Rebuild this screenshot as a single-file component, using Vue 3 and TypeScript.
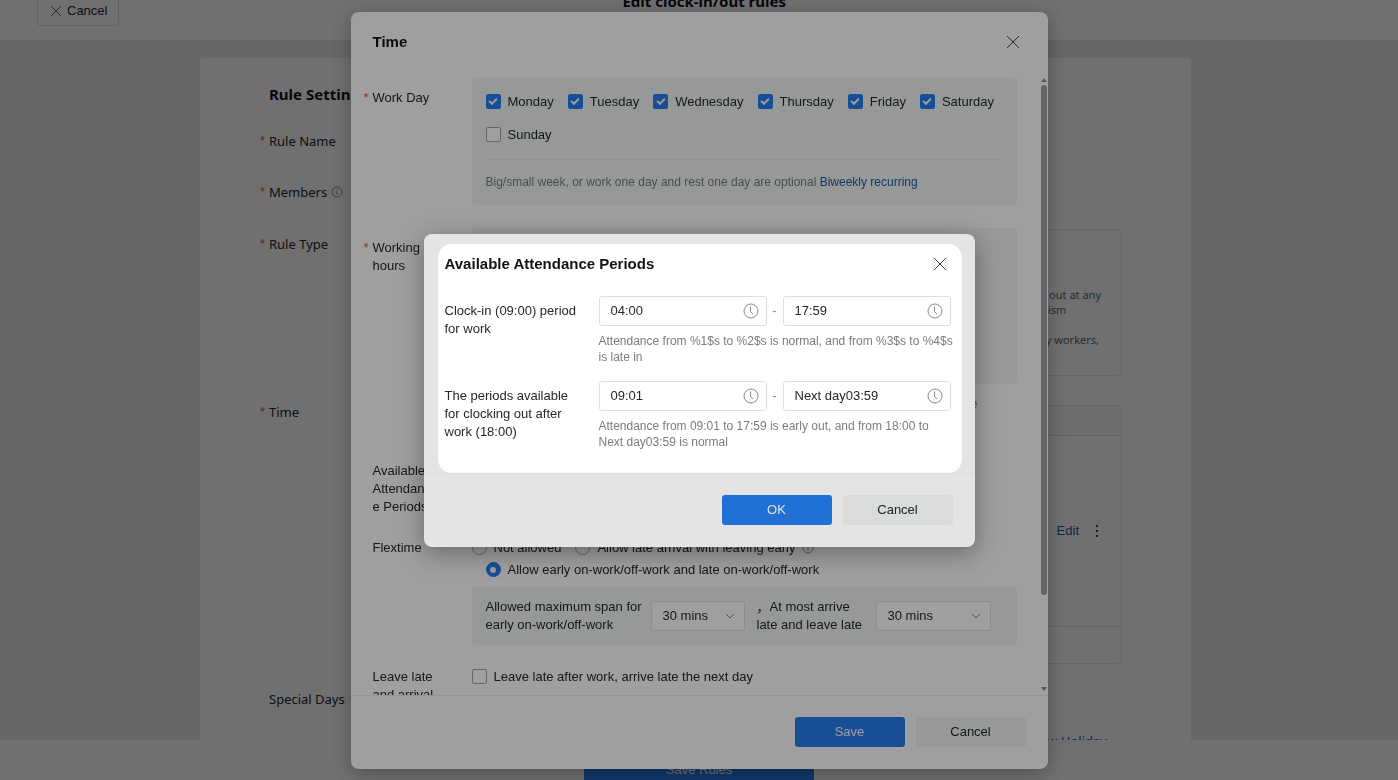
<script setup lang="ts">
import { ref } from 'vue'

interface Day {
  name: string
  on: boolean
}

interface Period {
  id: string
  label: string
  from: string
  to: string
  hint: string
}

const days = ref<Day[]>([
  { name: 'Monday', on: true },
  { name: 'Tuesday', on: true },
  { name: 'Wednesday', on: true },
  { name: 'Thursday', on: true },
  { name: 'Friday', on: true },
  { name: 'Saturday', on: true },
  { name: 'Sunday', on: false },
])

const periods = ref<Period[]>([
  {
    id: 'in',
    label: 'Clock-in (09:00) period for work',
    from: '04:00',
    to: '17:59',
    hint: 'Attendance from %1$s to %2$s is normal, and from %3$s to %4$s is late in',
  },
  {
    id: 'out',
    label: 'The periods available for clocking out after work (18:00)',
    from: '09:01',
    to: 'Next day03:59',
    hint: 'Attendance from 09:01 to 17:59 is early out, and from 18:00 to Next day03:59 is normal',
  },
])

const flextime = ref('both')
const earlySpan = ref('30 mins')
const lateSpan = ref('30 mins')
const leaveLate = ref(false)
const wideComma = '\uFF0C'
</script>

<template>
  <div class="page">
    <header class="topbar">
      <button type="button" class="back">
        <svg width="12" height="12" viewBox="0 0 12 12"><path d="M1 1l10 10M11 1L1 11" /></svg>
        Cancel
      </button>
      <h1>Edit clock-in/out rules</h1>
    </header>

    <main class="content">
      <section class="sheet">
        <h2>Rule Settings</h2>
        <div class="row"><span class="name required">Rule Name</span></div>
        <div class="row">
          <span class="name required">Members
            <svg class="info" width="12" height="12" viewBox="0 0 12 12"><circle cx="6" cy="6" r="5" /><path d="M6 5.2V9M6 3v1.2" /></svg>
          </span>
        </div>
        <div class="row type-row">
          <span class="name required">Rule Type</span>
          <div class="type-card">
            <p>Members can clock in and out at any<br>hours, no late or absenteeism<br>records.<br>Suited for sales, temporary workers,</p>
          </div>
        </div>
        <div class="row time-row">
          <span class="name required">Time</span>
          <div class="time-card">
            <div class="time-head"></div>
            <div class="time-body">
              <a href="#">Edit</a>
              <button type="button" class="more" aria-label="More">
                <svg width="4" height="14" viewBox="0 0 4 14"><path d="M1 1h2v2H1zM1 6h2v2H1zM1 11h2v2H1z" /></svg>
              </button>
            </div>
            <div class="time-foot"></div>
          </div>
        </div>
        <div class="row special-row">
          <span class="name">Special Days</span>
          <a href="#" class="holiday">New Holiday</a>
        </div>
      </section>
    </main>

    <footer class="bottombar">
      <button type="button" class="save-rules">Save Rules</button>
    </footer>
  </div>

  <div class="mask">
    <section class="dialog" role="dialog" aria-label="Time">
      <header class="dialog-head">
        <h2>Time</h2>
        <button type="button" class="close" aria-label="Close">
          <svg width="14" height="14" viewBox="0 0 14 14"><path d="M1 1l12 12M13 1L1 13" /></svg>
        </button>
      </header>

      <div class="dialog-main">
        <div class="form">
          <div class="field days-field">
            <span class="label required">Work Day</span>
            <div class="panel days-panel">
              <div class="days">
                <label v-for="day in days" :key="day.name" class="choice">
                  <input v-model="day.on" type="checkbox">{{ day.name }}
                </label>
              </div>
              <p class="note">Big/small week, or work one day and rest one day are optional <a href="#">Biweekly recurring</a></p>
            </div>
          </div>

          <div class="field hours-field">
            <span class="label required">Working hours</span>
            <div class="stack">
              <div class="panel hours-panel"></div>
              <p class="hours-note">Break time is deducted from the working time</p>
            </div>
          </div>

          <div class="field periods-field">
            <span class="label">Available Attendance Periods</span>
          </div>

          <div class="field flex-field">
            <span class="label">Flextime</span>
            <div class="stack">
              <div class="radios">
                <label class="choice"><input v-model="flextime" type="radio" name="flex" value="none">Not allowed</label>
                <label class="choice"><input v-model="flextime" type="radio" name="flex" value="late">Allow late arrival with leaving early
                  <svg class="info" width="12" height="12" viewBox="0 0 12 12"><circle cx="6" cy="6" r="5" /><path d="M6 5.2V9M6 3v1.2" /></svg>
                </label>
              </div>
              <label class="choice indented"><input v-model="flextime" type="radio" name="flex" value="both">Allow early on-work/off-work and late on-work/off-work</label>
              <div class="panel span-panel">
                <label for="early" class="early-text">Allowed maximum span for early on-work/off-work</label>
                <span class="picker early-picker">
                  <select id="early" v-model="earlySpan"><option>30 mins</option></select>
                  <svg width="10" height="10" viewBox="0 0 10 10"><path d="M1 3l4 4 4-4" /></svg>
                </span>
                <label for="late" class="late-text">{{ wideComma }}At most arrive late and leave late</label>
                <span class="picker late-picker">
                  <select id="late" v-model="lateSpan"><option>30 mins</option></select>
                  <svg width="10" height="10" viewBox="0 0 10 10"><path d="M1 3l4 4 4-4" /></svg>
                </span>
              </div>
            </div>
          </div>

          <div class="field">
            <span class="label">Leave late and arrival</span>
            <label class="choice"><input v-model="leaveLate" type="checkbox">Leave late after work, arrive late the next day</label>
          </div>
        </div>

        <div class="scroll" aria-hidden="true">
          <svg width="6" height="4" viewBox="0 0 6 4"><path d="M0 4l3-4 3 4z" /></svg>
          <i></i>
          <b></b>
          <svg width="6" height="4" viewBox="0 0 6 4"><path d="M0 0l3 4 3-4z" /></svg>
        </div>
      </div>

      <footer class="actions">
        <button type="button" class="btn primary">Save</button>
        <button type="button" class="btn">Cancel</button>
      </footer>
    </section>
  </div>

  <div class="mask">
    <section class="popup" role="dialog" aria-label="Available Attendance Periods">
      <div class="popup-main">
        <header class="popup-head">
          <h2>Available Attendance Periods</h2>
          <button type="button" class="close" aria-label="Close">
            <svg width="14" height="14" viewBox="0 0 14 14"><path d="M1 1l12 12M13 1L1 13" /></svg>
          </button>
        </header>
        <div v-for="period in periods" :key="period.id" class="period">
          <label :for="period.id" class="period-label">{{ period.label }}</label>
          <div class="period-body">
            <div class="range">
              <span class="time-box">
                <input :id="period.id" v-model="period.from" type="text">
                <svg width="16" height="16" viewBox="0 0 16 16"><circle cx="8" cy="8" r="7" /><path d="M7.500 3.500v5l2.500 2.500" /></svg>
              </span>
              <span class="dash">-</span>
              <span class="time-box">
                <input v-model="period.to" type="text" :aria-label="period.label + ' end'">
                <svg width="16" height="16" viewBox="0 0 16 16"><circle cx="8" cy="8" r="7" /><path d="M7.500 3.500v5l2.500 2.500" /></svg>
              </span>
            </div>
            <p class="hint">{{ period.hint }}</p>
          </div>
        </div>
      </div>
      <footer class="actions">
        <button type="button" class="btn primary">OK</button>
        <button type="button" class="btn">Cancel</button>
      </footer>
      <div class="spotlight"></div>
    </section>
  </div>
</template>

<style>
html,
body {
  height: 100%;
  overflow: hidden;
}
</style>

<style scoped>
* {
  box-sizing: border-box;
}

h1,
h2,
p {
  margin: 0;
}

a {
  color: #2058a8;
  text-decoration: none;
}

button,
input,
select {
  font: inherit;
  color: inherit;
}

button {
  cursor: pointer;
}

svg {
  flex: none;
  fill: none;
  stroke: currentColor;
}

.page,
.mask {
  font: 13px/18px "Liberation Sans", Arial, "Noto Sans CJK SC", sans-serif;
  color: #24282d;
}

h1,
h2 {
  color: #111417;
}

.page {
  display: flex;
  flex-direction: column;
  height: 100vh;
  overflow: hidden;
  background: #ebebeb;
}

.topbar {
  display: flex;
  flex: none;
  align-items: flex-end;
  height: 40px;
  padding: 0 37px 14px;
  background: #fff;
}

.topbar h1 {
  flex: 1;
  margin: 0 72px 0 0;
  padding-bottom: 16px;
  font: 700 15px/18px "Noto Sans", sans-serif;
  text-align: center;
}

.back {
  display: flex;
  align-items: center;
  gap: 5px;
  height: 31px;
  padding: 0 11px 0 12px;
  border: 1px solid #dcdcdc;
  border-radius: 4px;
  background: #fff;
}

.back svg {
  color: #5c6066;
}

.content {
  display: flex;
  flex: 1;
  justify-content: center;
  min-height: 0;
  padding: 18px 7px 0 0;
  overflow: hidden;
}

.sheet {
  width: 100%;
  max-width: 991px;
  height: 720px;
  padding: 24px 69px 0;
  border-radius: 4px;
  background: #fff;
  font-family: "Noto Sans", sans-serif;
}

.sheet h2 {
  margin-bottom: 20px;
  font-size: 15px;
  line-height: 24px;
}

.row {
  display: flex;
  min-height: 30px;
  margin-bottom: 21px;
}

.name {
  position: relative;
  flex: none;
  width: 104px;
  line-height: 30px;
}

.required::before {
  content: "*";
  position: absolute;
  left: -9px;
  color: #e8503f;
  font-family: "Liberation Sans", Arial, sans-serif;
}

.info {
  color: #8a8f96;
  vertical-align: -1px;
}

.type-row {
  justify-content: space-between;
  margin-top: 22px;
}

.type-card {
  width: 365px;
  height: 147px;
  padding: 57px 20px 0 0;
  border: 1px solid #e8e8e8;
  border-radius: 4px;
  font-size: 11px;
  line-height: 15px;
  color: #60646a;
  text-align: right;
}

.type-card p {
  display: inline-block;
  text-align: left;
}

.time-card {
  flex: 1;
  height: 259px;
  margin-top: 8px;
  border: 1px solid #e8e8e8;
  border-radius: 4px;
  font-family: "Liberation Sans", Arial, sans-serif;
}

.time-head {
  height: 30px;
  border-bottom: 1px solid #e2e2e2;
  background: #f7f7f7;
}

.time-body {
  display: flex;
  align-items: center;
  justify-content: flex-end;
  gap: 16px;
  height: 190px;
  padding-right: 22px;
}

.time-foot {
  border-top: 1px solid #e2e2e2;
}

.more {
  display: flex;
  padding: 0;
  border: 0;
  background: none;
  color: #1d4f8f;
}

.more path {
  fill: currentColor;
  stroke: none;
}

.special-row {
  justify-content: space-between;
  margin-top: -1px;
}

.holiday {
  padding: 48px 15px 0 0;
  line-height: 18px;
}

.bottombar {
  flex: none;
  height: 40px;
  padding-top: 12px;
  background: #fff;
  text-align: center;
}

.save-rules {
  width: 230px;
  height: 36px;
  border: 0;
  border-radius: 3px;
  background: #267ef0;
  color: #fff;
}

.mask {
  position: fixed;
  inset: 0;
  display: flex;
  align-items: center;
  justify-content: center;
  background: rgba(0, 0, 0, 0.3);
}

.dialog {
  display: flex;
  flex-direction: column;
  width: 50%;
  max-width: 697px;
  height: calc(100vh - 23px);
  border-radius: 8px;
  background: #fff;
  box-shadow: 0 4px 20px rgba(0, 0, 0, 0.3);
}

.dialog-head {
  display: flex;
  flex: none;
  align-items: center;
  justify-content: space-between;
  height: 66px;
  padding: 0 28px 6px 22px;
}

.dialog-head h2,
.popup-head h2 {
  font-size: 15px;
  line-height: 20px;
}

.close {
  display: flex;
  padding: 0;
  border: 0;
  background: none;
  color: #3c4046;
}

.dialog-main {
  display: flex;
  flex: 1;
  min-height: 0;
}

.form {
  flex: 1;
  padding: 0 24px 0 22px;
  overflow: hidden;
}

.field {
  display: flex;
}

.label {
  position: relative;
  flex: none;
  width: 64px;
  margin-right: 35px;
  word-break: break-all;
}

.required.label {
  word-break: normal;
}

.days-field .label,
.hours-field .label {
  margin-top: 11px;
}

.panel {
  border-radius: 4px;
  background: #f3f6f5;
}

.days-panel {
  flex: 1;
  height: 127px;
  padding: 15px 14px 0;
}

.days {
  display: flex;
  flex-wrap: wrap;
  gap: 15px 14px;
  padding-bottom: 15px;
  border-bottom: 1px solid #e6e9e8;
}

.choice {
  display: flex;
  align-items: center;
  gap: 7px;
  height: 18px;
}

.choice input {
  display: grid;
  flex: none;
  place-items: center;
  width: 15px;
  height: 15px;
  margin: 0;
  border: 1px solid #a0a4a8;
  border-radius: 2px;
  background: #fff;
  appearance: none;
}

.choice input[type="radio"] {
  border-radius: 50%;
}

.choice input:checked {
  border-color: #267ef0;
  background: #267ef0;
}

.choice input[type="checkbox"]:checked::after {
  content: "";
  box-sizing: border-box;
  width: 8px;
  height: 5px;
  margin-bottom: 2px;
  border: solid #fff;
  border-width: 0 0 2px 2px;
  transform: rotate(-45deg);
}

.choice input[type="radio"]:checked::after {
  content: "";
  width: 6px;
  height: 6px;
  border-radius: 50%;
  background: #fff;
}

.note {
  padding-top: 14px;
  font-size: 12px;
  line-height: 16px;
  color: #787c82;
}

.hours-field {
  margin-top: 23px;
}

.stack {
  flex: 1;
}

.hours-panel {
  height: 156px;
}

.hours-note {
  margin: 12px 39px 0 0;
  font-size: 12px;
  line-height: 16px;
  color: #787c82;
  text-align: right;
}

.periods-field {
  margin-top: 50px;
}

.flex-field {
  margin: 23px 0;
}

.radios {
  display: flex;
  gap: 14px;
}

.indented {
  margin: 4px 0 7px 14px;
}

.span-panel {
  display: flex;
  align-items: center;
  height: 59px;
  padding: 1px 14px 0;
}

.early-text {
  width: 165px;
}

.late-text {
  width: 107px;
  margin: 0 12px;
}

.picker {
  position: relative;
  display: flex;
  align-items: center;
}

.picker select {
  width: 100%;
  height: 30px;
  padding: 0 11px;
  border: 1px solid #dfe1e3;
  border-radius: 3px;
  background: #fff;
  appearance: none;
}

.picker svg {
  position: absolute;
  right: 10px;
  color: #7d8186;
  pointer-events: none;
}

.early-picker {
  width: 94px;
}

.late-picker {
  width: 115px;
}

.scroll {
  display: flex;
  flex-direction: column;
  align-items: center;
  width: 7px;
  padding: 0 1px 4px 0;
  color: #8c8f93;
}

.scroll path {
  fill: currentColor;
  stroke: none;
}

.scroll i {
  flex: 5;
  width: 6px;
  margin-top: 3px;
  border-radius: 3px;
  background: #a0a4a8;
}

.scroll b {
  flex: 0.9;
}

.actions {
  display: flex;
  flex: none;
  gap: 11px;
  justify-content: flex-end;
  height: 74px;
  padding: 21px 22px 0;
  border-top: 1px solid #f0f0f0;
}

.popup .actions {
  border-color: #f8f8f8;
}

.btn {
  width: 110px;
  height: 30px;
  border: 0;
  border-radius: 3px;
  background: #f3f6f5;
}

.btn.primary {
  background: #267ef0;
  color: #fff;
}

.popup {
  position: relative;
  width: 551px;
  border-radius: 8px;
  background: #fff;
  box-shadow: 0 6px 24px rgba(0, 0, 0, 0.35);
}

.popup-main {
  padding: 20px 24px 7px 21px;
}

.popup-head {
  display: flex;
  align-items: center;
  justify-content: space-between;
  margin-bottom: 22px;
  padding-right: 4px;
}

.period {
  display: flex;
  margin-bottom: 16px;
}

.period-label {
  flex: none;
  width: 135px;
  margin: 6px 19px 0 0;
}

.period-body {
  flex: 1;
}

.range {
  display: flex;
  align-items: center;
}

.time-box {
  display: flex;
  flex: 1;
  align-items: center;
  height: 30px;
  padding: 0 7px 0 11px;
  border: 1px solid #dcdfe2;
  border-radius: 3px;
}

.time-box input {
  flex: 1;
  width: 0;
  padding: 0;
  border: 0;
  outline: 0;
  background: none;
}

.time-box svg {
  color: #85898f;
}

.dash {
  width: 16px;
  color: #85898f;
  text-align: center;
}

.hint {
  margin: 7px -4px 0 0;
  font-size: 12px;
  line-height: 16px;
  color: #787c82;
}

.spotlight {
  position: absolute;
  inset: 10px 13px 74px 14px;
  border-radius: 14px;
  box-shadow: 0 0 0 2000px rgba(0, 0, 0, 0.106);
  pointer-events: none;
}
</style>
